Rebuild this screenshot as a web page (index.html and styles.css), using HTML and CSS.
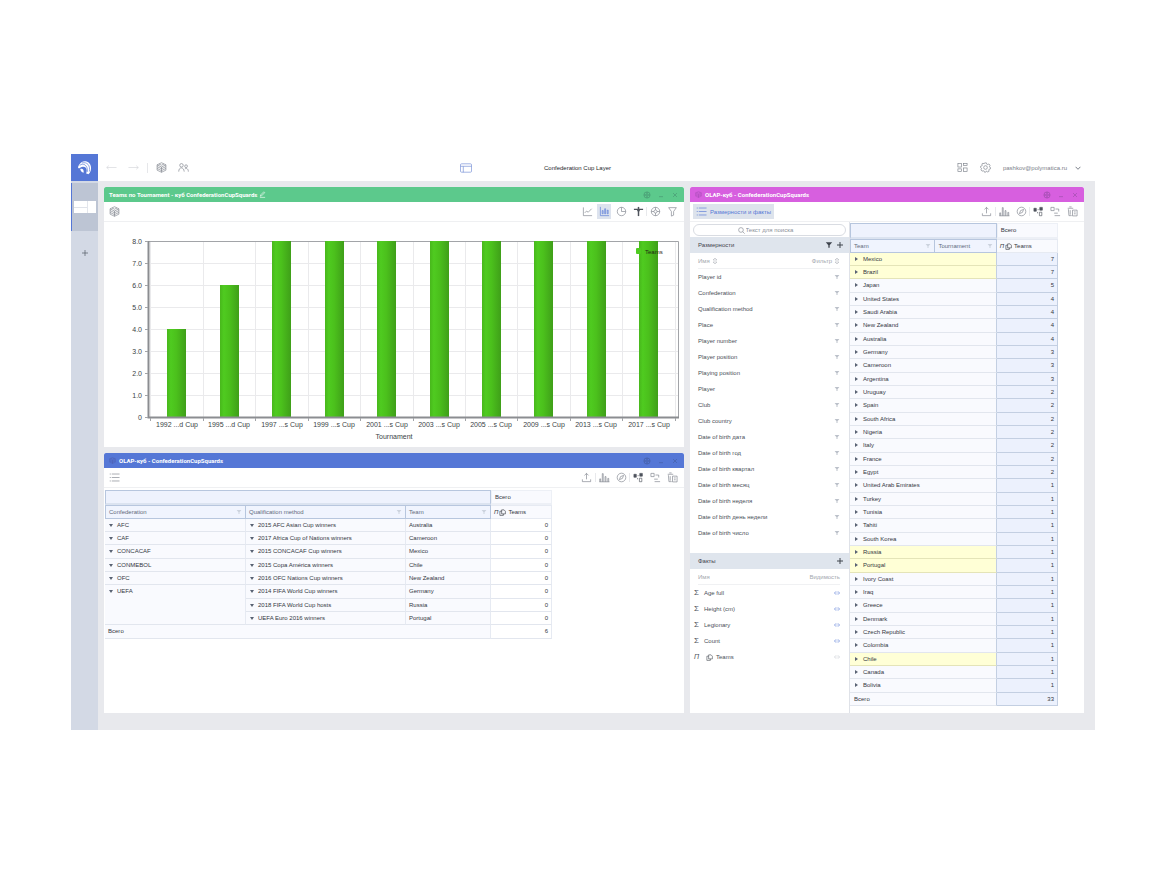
FILE: index.html
```html
<!DOCTYPE html>
<html lang="ru">
<head>
<meta charset="utf-8">
<title>Confederation Cup Layer</title>
<link rel="stylesheet" href="styles.css">
</head>
<body>
<svg class="defs" aria-hidden="true">
  <symbol id="i-back" viewBox="0 0 12 12"><path d="M11.500 6H.8M3 4L.8 6 3 8"/></symbol>
  <symbol id="i-fwd" viewBox="0 0 12 12"><path d="M.5 6h10.700M9 4l2.200 2L9 8"/></symbol>
  <symbol id="i-cube" viewBox="0 0 12 12"><path d="M6 .8l4.800 2.300v5.800L6 11.200 1.200 8.900V3.100zM1.200 3.100L6 5.500l4.800-2.400M3.300 2.200L6 3.500l2.700-1.300M1.200 5L6 7.400 10.800 5M1.200 7L6 9.400 10.800 7M6 5.500v5.700"/></symbol>
  <symbol id="i-people" viewBox="0 0 12 12"><circle cx="3.800" cy="3.600" r="1.900"/><circle cx="8.800" cy="4.600" r="1.500"/><path d="M.8 10.500c0-5.500 5.500-5.500 6 0M7.500 7.500c2-1.200 3.800.2 3.800 3"/></symbol>
  <symbol id="i-layout" viewBox="0 0 12 10"><rect x=".5" y=".8" width="11" height="8.400" rx="1"/><path d="M.5 3.300h11M3.300 3.300v6"/></symbol>
  <symbol id="i-tiles" viewBox="0 0 12 12"><rect x="1" y="1.500" width="4" height="4"/><rect x="7" y="1.500" width="4" height="2.500"/><rect x="1" y="7.500" width="4" height="3"/><rect x="7" y="6.500" width="4" height="4"/></symbol>
  <symbol id="i-gear" viewBox="0 0 12 12"><path d="M5 1h2l.4 1.400 1 .4 1.300-.7L11 3.500l-.6 1.200.1.900.9.400v1.500L10 7.900l-.5.900.5 1.200-1.500 1-1-.9-1 .1-.5 1H5l-.5-1.300-1-.4L2.200 10 1 8.600l.7-1.200-.3-.9L.6 6V4.700L2 4.300l.5-.9L2 2.100l1.300-.9 1.100.9z"/><circle cx="6" cy="6" r="2"/></symbol>
  <symbol id="i-wheel" viewBox="0 0 12 12"><circle cx="6" cy="6" r="4.600"/><circle cx="6" cy="6" r="1.700"/><path d="M6 1.400v2.900M6 7.700v2.900M1.400 6h2.900M7.700 6h2.900"/></symbol>
  <symbol id="i-down" viewBox="0 0 6 6"><path d="M.6 1.800L3 4.300l2.400-2.500"/></symbol>
  <symbol id="i-line" viewBox="0 0 12 12"><path d="M1.500 1.500v9h9.500M3 7.500l2-2 1.800 1.300L10.500 3"/></symbol>
  <symbol id="i-bars" viewBox="0 0 12 12"><path d="M1.500 1v9.500h9.500M3.500 5v3.500h1V5zM6.200 3v5.500h1V3zM9 4.500v4h1v-4z"/></symbol>
  <symbol id="i-pie" viewBox="0 0 12 12"><circle cx="6" cy="6" r="4.600"/><path d="M6 1.400V6h4.600"/></symbol>
  <symbol id="i-post" viewBox="0 0 12 12"><path d="M1 3.600h10M4.600 5h2.800" stroke-width="1.400"/><path d="M6 1v10" stroke-width="1.600"/></symbol>
  <symbol id="i-funnel" viewBox="0 0 12 12"><path d="M1.800 1.800h8.400L7.200 6v4L4.800 11V6z"/></symbol>
  <symbol id="i-list" viewBox="0 0 12 12"><path d="M3 2.200h8.500M3 6h8.500M3 9.800h8.500M.8 2.200h1.200M.8 6h1.200M.8 9.800h1.200"/></symbol>
  <symbol id="i-export" viewBox="0 0 12 12"><path d="M1.500 8v2.500h9V8M6 8V1.500M3.800 3.700L6 1.500l2.200 2.200"/></symbol>
  <symbol id="i-hist" viewBox="0 0 12 12"><path d="M.8 10.700V7.500h1v3.200M3.600 10.700V1.800h1v8.900M6.600 10.700V5h1v5.700M9.600 10.700V7h1v3.700M.4 10.700h11"/></symbol>
  <symbol id="i-compass" viewBox="0 0 12 12"><circle cx="6" cy="6" r="4.700"/><path d="M8.300 3.700L7 7 3.700 8.300 5 5z"/></symbol>
  <symbol id="i-swap" viewBox="0 0 12 12"><path d="M1 2.500h2.600v3.200H1zM7.400 1.500h2.800v3H7.400z" fill="currentColor"/><path d="M7 6.800h2.600v3.800H7zM5 4h1.200M5 6.500V8"/></symbol>
  <symbol id="i-tree" viewBox="0 0 12 12"><path d="M1 1.500h3.500V5H1zM6 3.300h3.500V6M4.500 7.800h4M5 10.500h6"/></symbol>
  <symbol id="i-clear" viewBox="0 0 12 12"><path d="M.8 2.500h6M2.500 1h2.500M1.500 3.500l.6 7h3M6 4.500h5v6.300H6zM7.500 6.500h2M7.500 8.500h2M3.500 4.500v5"/></symbol>
  <symbol id="i-search" viewBox="0 0 8 8"><circle cx="3.400" cy="3.400" r="2.700"/><path d="M5.400 5.400l2.200 2.200"/></symbol>
  <symbol id="i-f" viewBox="0 0 6 6"><path d="M.6 1h4.800L3.500 3.200V5h-1V3.200z" fill="currentColor" stroke="none"/></symbol>
  <symbol id="i-sort" viewBox="0 0 6 8"><path d="M1 3L3 1l2 2zM1 5l2 2 2-2z"/></symbol>
  <symbol id="i-plus" viewBox="0 0 8 8"><path d="M4 1v6M1 4h6"/></symbol>
  <symbol id="i-eye" viewBox="0 0 6 6"><path d="M2 1.400L.5 3 2 4.600M4 1.400L5.500 3 4 4.600M3 2.500v1"/></symbol>
  <symbol id="i-copy" viewBox="0 0 8 8"><path d="M3 1h2.800L7.300 2.500V5.600H3zM3 2.500H1v4.800h4V5.600"/></symbol>
  <symbol id="i-pen" viewBox="0 0 8 8"><path d="M1.500 6l.4-1.500L5.500.9l1 1L3 5.500zM1 7.300h6"/></symbol>
  <symbol id="i-x" viewBox="0 0 12 12"><path d="M3 3l6 6M9 3L3 9"/></symbol>
  <symbol id="i-min" viewBox="0 0 12 12"><path d="M3 8.500h6"/></symbol>
</svg>

<div class="app">
  <aside class="side">
    <a class="logo" href="#" aria-label="Polymatica">
      <svg viewBox="0 0 14 14"><path d="M2 4.500C3.500 1 8.500-.3 11.500 3c2.500 2.800 2 8-.8 10.200-.9-.3-1.500-.6-2.200-.6C10 9 8.500 6 5.500 6.200 3.500 6.300 2 8.500 1.200 7.500.6 6.600 1.400 5.500 2 4.500z" fill="#fff"/><path d="M2.500 5C6 2.500 10 4.500 9.800 11M4.500 2.800c5-1.500 8.200 2.500 7 8M4 8.200c2.500-.8 3.500 1 2.500 3.600" fill="none" stroke="#5577d6" stroke-width=".6"/><path d="M3 8.500c2-1 3.600.3 3.200 3.500-1.700-.4-3-1.800-3.200-3.500z" fill="#fff"/></svg>
    </a>
    <button class="layer" aria-label="Confederation Cup Layer"><span class="mini"><i></i><i></i><i></i></span></button>
    <button class="add" aria-label="Добавить слой"><svg><use href="#i-plus"/></svg></button>
  </aside>

  <header class="top">
    <nav class="nav">
      <button aria-label="Назад" class="faint"><svg><use href="#i-back"/></svg></button>
      <button aria-label="Вперёд" class="faint"><svg><use href="#i-fwd"/></svg></button>
      <span class="bar"></span>
      <button aria-label="Кубы"><svg><use href="#i-cube"/></svg></button>
      <button aria-label="Пользователи"><svg><use href="#i-people"/></svg></button>
    </nav>
    <div class="heading">
      <button class="blue" aria-label="Макет"><svg><use href="#i-layout"/></svg></button>
      <h1>Confederation Cup Layer</h1>
      <div class="account">
        <button aria-label="Плитки"><svg><use href="#i-tiles"/></svg></button>
        <button aria-label="Настройки"><svg><use href="#i-gear"/></svg></button>
        <button class="user">pashkov@polymatica.ru <svg><use href="#i-down"/></svg></button>
      </div>
    </div>
  </header>

  <main class="board">
    <section class="panel chart-panel">
      <header class="title green"><h2>Teams по Tournament - куб ConfederationCupSquards</h2><button class="pen" aria-label="Переименовать"><svg><use href="#i-pen"/></svg></button>
        <div class="win"><button aria-label="Настройки окна"><svg><use href="#i-wheel"/></svg></button><button aria-label="Свернуть"><svg><use href="#i-min"/></svg></button><button aria-label="Закрыть"><svg><use href="#i-x"/></svg></button></div></header>
      <div class="tools">
        <button aria-label="Куб"><svg><use href="#i-cube"/></svg></button>
        <div class="set">
          <button aria-label="Линии"><svg><use href="#i-line"/></svg></button>
          <button class="on" aria-label="Столбцы"><svg><use href="#i-bars"/></svg></button>
          <button aria-label="Круг"><svg><use href="#i-pie"/></svg></button>
          <button class="dark" aria-label="Оси"><svg><use href="#i-post"/></svg></button>
          <button class="sep" aria-label="Настройки"><svg><use href="#i-wheel"/></svg></button>
          <button aria-label="Фильтр"><svg><use href="#i-funnel"/></svg></button>
        </div>
      </div>
      <svg class="chart" viewBox="0 0 580 225" role="img" aria-label="Teams по Tournament">
        <defs>
          <linearGradient id="bar"><stop offset="0" stop-color="#48b71c"/><stop offset=".2" stop-color="#4fcb20"/><stop offset=".5" stop-color="#4bc01c"/><stop offset="1" stop-color="#3f9f19"/></linearGradient>
          <rect id="full" width="19" height="176" fill="url(#bar)"/>
        </defs>
        <path class="grid" d="M46 41.500h528M46 63.500h528M46 85.500h528M46 107.500h528M46 129.500h528M46 151.500h528M46 173.500h528M46.500 19v176M99.500 19v176M151.500 19v176M204.500 19v176M256.500 19v176M309.500 19v176M361.500 19v176M413.500 19v176M466.500 19v176M518.500 19v176M571.500 19v176"/>
        <path class="frame" d="M44 19.500h530.500V195"/>
        <rect x="63" y="107" width="19" height="88" fill="url(#bar)"/>
        <rect x="116" y="63" width="19" height="132" fill="url(#bar)"/>
        <use href="#full" x="168" y="19"/><use href="#full" x="221" y="19"/><use href="#full" x="273" y="19"/><use href="#full" x="326" y="19"/><use href="#full" x="378" y="19"/><use href="#full" x="430" y="19"/><use href="#full" x="483" y="19"/><use href="#full" x="535" y="19"/>
        <path class="axis" d="M44.500 19v176.500H575"/>
        <path class="frame" d="M41 19.500h3M41 41.500h3M41 63.500h3M41 85.500h3M41 107.500h3M41 129.500h3M41 151.500h3M41 173.500h3M41 195.500h3M46.500 196v3M99.500 196v3M151.500 196v3M204.500 196v3M256.500 196v3M309.500 196v3M361.500 196v3M413.500 196v3M466.500 196v3M518.500 196v3M571.500 196v3"/>
        <g class="ylab"><text x="38" y="22">8.0</text><text x="38" y="44">7.0</text><text x="38" y="66">6.0</text><text x="38" y="88">5.0</text><text x="38" y="110">4.0</text><text x="38" y="132">3.0</text><text x="38" y="154">2.0</text><text x="38" y="176">1.0</text><text x="38" y="198">0</text></g>
        <g class="xlab"><text x="73" y="205">1992 ...d Cup</text><text x="125" y="205">1995 ...d Cup</text><text x="178" y="205">1997 ...s Cup</text><text x="230" y="205">1999 ...s Cup</text><text x="283" y="205">2001 ...s Cup</text><text x="335" y="205">2003 ...s Cup</text><text x="387" y="205">2005 ...s Cup</text><text x="440" y="205">2009 ...s Cup</text><text x="492" y="205">2013 ...s Cup</text><text x="545" y="205">2017 ...s Cup</text><text x="290" y="217">Tournament</text></g>
        <text class="legend" x="541" y="32">Teams</text>
        <rect x="532" y="26" width="5" height="6" rx="1" fill="#4fcb20"/>
      </svg>
    </section>

    <section class="panel cube-panel">
      <header class="title indigo"><span class="mark"><svg><use href="#i-cube"/></svg></span><h2>OLAP-куб - ConfederationCupSquards</h2>
        <div class="win"><button aria-label="Настройки окна"><svg><use href="#i-wheel"/></svg></button><button aria-label="Свернуть"><svg><use href="#i-min"/></svg></button><button aria-label="Закрыть"><svg><use href="#i-x"/></svg></button></div></header>
      <div class="tools">
        <button aria-label="Размерности и факты"><svg><use href="#i-list"/></svg></button>
        <div class="set">
          <button class="lead" aria-label="Экспорт"><svg><use href="#i-export"/></svg></button>
          <button class="sep" aria-label="Диаграмма"><svg><use href="#i-hist"/></svg></button>
          <button aria-label="Навигатор"><svg><use href="#i-compass"/></svg></button>
          <button class="sep dark" aria-label="Поменять"><svg><use href="#i-swap"/></svg></button>
          <button aria-label="Дерево"><svg><use href="#i-tree"/></svg></button>
          <button aria-label="Очистить"><svg><use href="#i-clear"/></svg></button>
        </div>
      </div>
      <table class="pivot wide">
        <colgroup><col class="c-conf"><col class="c-qual"><col class="c-team"><col class="c-num"></colgroup>
        <thead>
          <tr class="drop"><th colspan="3"></th><th class="tot">Всего</th></tr>
          <tr class="names"><th>Confederation<svg><use href="#i-f"/></svg></th><th>Qualification method<svg><use href="#i-f"/></svg></th><th>Team<svg><use href="#i-f"/></svg></th><th class="tot"><em>П</em><svg><use href="#i-copy"/></svg>Teams</th></tr>
        </thead>
        <tbody>
          <tr><td><button class="tw open" aria-label="AFC"></button>AFC</td><td><button class="tw open" aria-label="2015 AFC"></button>2015 AFC Asian Cup winners</td><td>Australia</td><td class="n">0</td></tr>
          <tr><td><button class="tw open" aria-label="CAF"></button>CAF</td><td><button class="tw open" aria-label="2017 CAF"></button>2017 Africa Cup of Nations winners</td><td>Cameroon</td><td class="n">0</td></tr>
          <tr><td><button class="tw open" aria-label="CONCACAF"></button>CONCACAF</td><td><button class="tw open" aria-label="2015 CONCACAF"></button>2015 CONCACAF Cup winners</td><td>Mexico</td><td class="n">0</td></tr>
          <tr><td><button class="tw open" aria-label="CONMEBOL"></button>CONMEBOL</td><td><button class="tw open" aria-label="2015 Copa"></button>2015 Copa América winners</td><td>Chile</td><td class="n">0</td></tr>
          <tr><td><button class="tw open" aria-label="OFC"></button>OFC</td><td><button class="tw open" aria-label="2016 OFC"></button>2016 OFC Nations Cup winners</td><td>New Zealand</td><td class="n">0</td></tr>
          <tr><td rowspan="3"><button class="tw open" aria-label="UEFA"></button>UEFA</td><td><button class="tw open" aria-label="2014 FIFA"></button>2014 FIFA World Cup winners</td><td>Germany</td><td class="n">0</td></tr>
          <tr><td><button class="tw open" aria-label="2018 FIFA"></button>2018 FIFA World Cup hosts</td><td>Russia</td><td class="n">0</td></tr>
          <tr><td><button class="tw open" aria-label="UEFA Euro"></button>UEFA Euro 2016 winners</td><td>Portugal</td><td class="n">0</td></tr>
          <tr><td colspan="3">Всего</td><td class="n">6</td></tr>
        </tbody>
      </table>
    </section>

    <section class="panel team-panel">
      <header class="title violet"><span class="mark"><svg><use href="#i-cube"/></svg></span><h2>OLAP-куб - ConfederationCupSquards</h2>
        <div class="win"><button aria-label="Настройки окна"><svg><use href="#i-wheel"/></svg></button><button aria-label="Свернуть"><svg><use href="#i-min"/></svg></button><button aria-label="Закрыть"><svg><use href="#i-x"/></svg></button></div></header>
      <div class="tools">
        <button class="facts-btn"><svg><use href="#i-list"/></svg>Размерности и факты</button>
        <div class="set">
          <button class="lead" aria-label="Экспорт"><svg><use href="#i-export"/></svg></button>
          <button class="sep" aria-label="Диаграмма"><svg><use href="#i-hist"/></svg></button>
          <button aria-label="Навигатор"><svg><use href="#i-compass"/></svg></button>
          <button class="sep dark" aria-label="Поменять"><svg><use href="#i-swap"/></svg></button>
          <button aria-label="Дерево"><svg><use href="#i-tree"/></svg></button>
          <button aria-label="Очистить"><svg><use href="#i-clear"/></svg></button>
        </div>
      </div>
      <div class="split">
        <div class="fields">
          <label class="search"><svg><use href="#i-search"/></svg><input type="text" placeholder="Текст для поиска" aria-label="Текст для поиска"></label>
          <div class="band"><h3>Размерности</h3><button aria-label="Фильтр"><svg><use href="#i-f"/></svg></button><button aria-label="Добавить"><svg><use href="#i-plus"/></svg></button></div>
          <div class="cols"><span>Имя <svg><use href="#i-sort"/></svg></span><span>Фильтр <svg><use href="#i-sort"/></svg></span></div>
          <ul class="dims">
            <li>Player id<svg><use href="#i-f"/></svg></li>
            <li>Confederation<svg><use href="#i-f"/></svg></li>
            <li>Qualification method<svg><use href="#i-f"/></svg></li>
            <li>Place<svg><use href="#i-f"/></svg></li>
            <li>Player number<svg><use href="#i-f"/></svg></li>
            <li>Player position<svg><use href="#i-f"/></svg></li>
            <li>Playing position<svg><use href="#i-f"/></svg></li>
            <li>Player<svg><use href="#i-f"/></svg></li>
            <li>Club<svg><use href="#i-f"/></svg></li>
            <li>Club country<svg><use href="#i-f"/></svg></li>
            <li>Date of birth дата<svg><use href="#i-f"/></svg></li>
            <li>Date of birth год<svg><use href="#i-f"/></svg></li>
            <li>Date of birth квартал<svg><use href="#i-f"/></svg></li>
            <li>Date of birth месяц<svg><use href="#i-f"/></svg></li>
            <li>Date of birth неделя<svg><use href="#i-f"/></svg></li>
            <li>Date of birth день недели<svg><use href="#i-f"/></svg></li>
            <li>Date of birth число<svg><use href="#i-f"/></svg></li>
          </ul>
          <div class="band"><h3>Факты</h3><button aria-label="Добавить"><svg><use href="#i-plus"/></svg></button></div>
          <div class="cols plain"><span>Имя</span><span>Видимость</span></div>
          <ul class="facts">
            <li><b>Σ</b>Age full<button aria-label="Видимость"><svg><use href="#i-eye"/></svg></button></li>
            <li><b>Σ</b>Height (cm)<button aria-label="Видимость"><svg><use href="#i-eye"/></svg></button></li>
            <li><b>Σ</b>Legionary<button aria-label="Видимость"><svg><use href="#i-eye"/></svg></button></li>
            <li><b>Σ</b>Count<button aria-label="Видимость"><svg><use href="#i-eye"/></svg></button></li>
            <li class="off"><em>П</em><svg class="copy"><use href="#i-copy"/></svg>Teams<button aria-label="Видимость"><svg><use href="#i-eye"/></svg></button></li>
          </ul>
        </div>
        <table class="pivot narrow">
          <colgroup><col class="c-team"><col class="c-num"><col class="c-num"></colgroup>
          <thead>
            <tr class="drop"><th colspan="2"></th><th class="tot">Всего</th></tr>
            <tr class="names"><th>Team<svg><use href="#i-f"/></svg></th><th>Tournament<svg><use href="#i-f"/></svg></th><th class="tot"><em>П</em><svg><use href="#i-copy"/></svg>Teams</th></tr>
          </thead>
          <tbody>
            <tr class="hit"><td colspan="2"><button class="tw" aria-label="Раскрыть"></button>Mexico</td><td class="n">7</td></tr>
            <tr class="hit"><td colspan="2"><button class="tw" aria-label="Раскрыть"></button>Brazil</td><td class="n">7</td></tr>
            <tr><td colspan="2"><button class="tw" aria-label="Раскрыть"></button>Japan</td><td class="n">5</td></tr>
            <tr><td colspan="2"><button class="tw" aria-label="Раскрыть"></button>United States</td><td class="n">4</td></tr>
            <tr><td colspan="2"><button class="tw" aria-label="Раскрыть"></button>Saudi Arabia</td><td class="n">4</td></tr>
            <tr><td colspan="2"><button class="tw" aria-label="Раскрыть"></button>New Zealand</td><td class="n">4</td></tr>
            <tr><td colspan="2"><button class="tw" aria-label="Раскрыть"></button>Australia</td><td class="n">4</td></tr>
            <tr><td colspan="2"><button class="tw" aria-label="Раскрыть"></button>Germany</td><td class="n">3</td></tr>
            <tr><td colspan="2"><button class="tw" aria-label="Раскрыть"></button>Cameroon</td><td class="n">3</td></tr>
            <tr><td colspan="2"><button class="tw" aria-label="Раскрыть"></button>Argentina</td><td class="n">3</td></tr>
            <tr><td colspan="2"><button class="tw" aria-label="Раскрыть"></button>Uruguay</td><td class="n">2</td></tr>
            <tr><td colspan="2"><button class="tw" aria-label="Раскрыть"></button>Spain</td><td class="n">2</td></tr>
            <tr><td colspan="2"><button class="tw" aria-label="Раскрыть"></button>South Africa</td><td class="n">2</td></tr>
            <tr><td colspan="2"><button class="tw" aria-label="Раскрыть"></button>Nigeria</td><td class="n">2</td></tr>
            <tr><td colspan="2"><button class="tw" aria-label="Раскрыть"></button>Italy</td><td class="n">2</td></tr>
            <tr><td colspan="2"><button class="tw" aria-label="Раскрыть"></button>France</td><td class="n">2</td></tr>
            <tr><td colspan="2"><button class="tw" aria-label="Раскрыть"></button>Egypt</td><td class="n">2</td></tr>
            <tr><td colspan="2"><button class="tw" aria-label="Раскрыть"></button>United Arab Emirates</td><td class="n">1</td></tr>
            <tr><td colspan="2"><button class="tw" aria-label="Раскрыть"></button>Turkey</td><td class="n">1</td></tr>
            <tr><td colspan="2"><button class="tw" aria-label="Раскрыть"></button>Tunisia</td><td class="n">1</td></tr>
            <tr><td colspan="2"><button class="tw" aria-label="Раскрыть"></button>Tahiti</td><td class="n">1</td></tr>
            <tr><td colspan="2"><button class="tw" aria-label="Раскрыть"></button>South Korea</td><td class="n">1</td></tr>
            <tr class="hit"><td colspan="2"><button class="tw" aria-label="Раскрыть"></button>Russia</td><td class="n">1</td></tr>
            <tr class="hit"><td colspan="2"><button class="tw" aria-label="Раскрыть"></button>Portugal</td><td class="n">1</td></tr>
            <tr><td colspan="2"><button class="tw" aria-label="Раскрыть"></button>Ivory Coast</td><td class="n">1</td></tr>
            <tr><td colspan="2"><button class="tw" aria-label="Раскрыть"></button>Iraq</td><td class="n">1</td></tr>
            <tr><td colspan="2"><button class="tw" aria-label="Раскрыть"></button>Greece</td><td class="n">1</td></tr>
            <tr><td colspan="2"><button class="tw" aria-label="Раскрыть"></button>Denmark</td><td class="n">1</td></tr>
            <tr><td colspan="2"><button class="tw" aria-label="Раскрыть"></button>Czech Republic</td><td class="n">1</td></tr>
            <tr><td colspan="2"><button class="tw" aria-label="Раскрыть"></button>Colombia</td><td class="n">1</td></tr>
            <tr class="hit"><td colspan="2"><button class="tw" aria-label="Раскрыть"></button>Chile</td><td class="n">1</td></tr>
            <tr><td colspan="2"><button class="tw" aria-label="Раскрыть"></button>Canada</td><td class="n">1</td></tr>
            <tr><td colspan="2"><button class="tw" aria-label="Раскрыть"></button>Bolivia</td><td class="n">1</td></tr>
            <tr><td colspan="2">Всего</td><td class="n">33</td></tr>
          </tbody>
        </table>
      </div>
    </section>
  </main>
</div>
</body>
</html>
```
FILE: styles.css
```css
* { box-sizing: border-box; margin: 0; padding: 0; }

body {
  padding: 154px 71px;
  background: #fff;
  color: #33373e;
  font-family: "Liberation Sans", Arial, sans-serif;
  font-size: 6px;
  line-height: 12px;
}

.defs { position: absolute; width: 0; height: 0; }
svg { display: block; flex: none; width: 11px; height: 11px; fill: none; stroke: currentColor; stroke-width: .7; }
button { display: flex; align-items: center; justify-content: center; border: 0; background: none; color: inherit; font: inherit; cursor: pointer; }
h1, h2, h3 { font: inherit; }
ul { list-style: none; }

/* shell */
.app {
  display: grid;
  grid-template-columns: 27px 1fr;
  grid-template-rows: 27px auto;
  grid-template-areas: "side top" "side board";
  background: #e8e9ed;
}
.side { grid-area: side; background: #d3d9e5; }
.logo { display: flex; align-items: center; justify-content: center; height: 27px; background: #5577d6; }
.logo svg { width: 15px; height: 15px; stroke: none; }
.layer { width: 100%; height: 48px; margin-top: 2px; border-left: 1px solid #5577d6; background: #bdc5d4; }
.mini { display: grid; grid-template: 6px 6px / 13px 8px; gap: 0 1px; width: 22px; background: #e3e6ec; }
.mini i { background: #fff; }
.mini i:nth-child(2) { grid-row: span 2; }
.mini i:nth-child(3) { border-top: 1px solid #e0e3ea; }
.add { width: 100%; height: 43px; color: #555b66; }
.add svg { width: 8px; height: 8px; }

.top {
  grid-area: top;
  display: grid;
  grid-template-columns: 362fr 635fr;
  background: #fff;
  color: #7b808a;
}
.nav { display: flex; align-items: center; gap: 11px; padding-left: 8px; }
.nav .bar { width: 1px; height: 10px; margin: 0 -3px; background: #e6e7ea; }
.nav .faint { color: #d3d5da; }
.heading { display: flex; align-items: center; }
.heading h1 { margin-left: 72px; color: #24272c; }
.blue { color: #7b93d8; }
.blue svg { width: 12px; height: 10px; }
.account { display: flex; align-items: center; gap: 12px; margin-left: auto; padding-right: 14px; }
.user { gap: 8px; }
.user svg { width: 6px; height: 6px; stroke-width: 1; }

/* board */
.board {
  grid-area: board;
  display: grid;
  grid-template-columns: 580fr 394fr;
  grid-template-rows: auto 1fr;
  grid-template-areas: "chart team" "cube team";
  gap: 6px;
  padding: 6px 11px 17px 6px;
}
.chart-panel { grid-area: chart; }
.cube-panel { grid-area: cube; }
.team-panel { grid-area: team; display: flex; flex-direction: column; }
.panel { background: #fff; min-width: 0; }

.title { display: flex; align-items: center; height: 15px; padding: 0 2px 0 5px; border-radius: 2px 2px 0 0; color: #fff; font-family: Roboto, "Liberation Sans", sans-serif; }
.title h2 { font-weight: 700; }
.mark { width: 10px; color: rgb(60 40 90 / .3); }
.mark svg { width: 7px; height: 7px; }
.pen { margin-left: 2px; }
.pen svg { width: 7px; height: 7px; }
.win { display: flex; margin-left: auto; color: rgb(30 40 60 / .3); }
.win button { width: 14px; height: 14px; }
.win svg { width: 8px; height: 8px; stroke-width: 1; }
.green { background: #5cc98c; }
.indigo { background: #5577d6; }
.violet { background: #d75fdf; }

.tools { display: flex; align-items: center; justify-content: space-between; height: 20px; padding: 0 5px 0 3px; border-bottom: 1px solid #eff0f2; color: #7b808a; }
.tools > button:not(.facts-btn) { width: 15px; height: 15px; }
.tools svg { width: 11px; height: 11px; }
.set { display: flex; gap: 3px; }
.set button { position: relative; width: 14px; height: 15px; }
.set .lead { margin-right: 1px; }
.set .on { background: #dde3ee; color: #5577d6; }
.set .dark { color: #4e535c; }
.set .sep::before { content: ""; position: absolute; left: -2px; top: 3px; width: 1px; height: 9px; background: #e8e9ec; }
.facts-btn { gap: 3px; height: 15px; padding: 0 3px; background: #dde3ec; color: #5577d6; }

/* chart */
.chart { width: 100%; height: auto; stroke: none; }
.chart text { fill: #3b3f46; font-size: 7px; }
.chart .legend { fill: #1e2a14; font-size: 6px; }
.chart .grid { stroke: #eaeaec; stroke-width: 1; }
.chart .frame { stroke: #a2a4a8; stroke-width: 1; }
.chart .axis { stroke: #8b8d91; stroke-width: 2; }
.ylab { text-anchor: end; }
.xlab { text-anchor: middle; }

/* pivot tables */
.pivot { border-collapse: separate; border-spacing: 0; table-layout: fixed; }
.wide { width: 447px; margin: 2px 0 0 1px; }
.narrow { width: 208px; margin-top: 1px; }
.c-conf { width: 141px; }
.c-qual { width: 160px; }
.c-team { width: 85px; }
.c-num { width: 61px; }
.pivot th, .pivot td { height: 13px; padding: 0 3px; line-height: 12px; text-align: left; font-weight: 400; white-space: nowrap; vertical-align: top; border-right: 1px solid #e6eaf2; border-bottom: 1px solid #e2e6ee; background: #f9fafe; }
.pivot tbody tr:nth-child(3n) td { height: 14px; }
.pivot .drop th { height: 15px; border: 1px solid #b7c6de; border-width: 1px 1px 2px; border-bottom-color: #dbe3f0; background: #eef2fd; }
.pivot .drop .tot { border-color: #edf0f6; background: #f9fafe; }
.pivot .names th { height: 14px; color: #626b7c; border: 1px solid #b7c6de; border-left: 0; background: #f0f4fe; }
.pivot .names th:first-child { border-left: 1px solid #b7c6de; }
.pivot .names .tot { color: #33373e; border-color: #e6eaf2; background: #f9fafe; }
.names svg { float: right; width: 6px; height: 6px; margin-top: 3px; color: #ccd3de; }
.names .tot svg { float: none; display: inline-block; width: 7px; height: 7px; margin: 0 2px 0 1px; vertical-align: middle; color: #33373e; }
.pivot .tot { padding-left: 3px; }
.pivot .n { padding-right: 3px; text-align: right; }
.wide .n { background: #fff; }
.narrow .n { background: #ecf1fd; border-color: #c3cfe2; }
.narrow td:first-child { padding-left: 4px; border-right-color: #c3cfe2; }
.narrow .drop th { height: 16px; }
.narrow .names th { height: 13px; }
.hit td:first-child { background: #ffffd6; border-bottom-color: #e4e4b8; }
.tw { display: inline-block; width: 3px; height: 4px; margin: 0 5px 0 1px; background: #596273; clip-path: polygon(0 0, 100% 50%, 0 100%); }
.tw.open { width: 4px; height: 3px; margin: 0 4px 1px 1px; clip-path: polygon(0 0, 100% 0, 50% 100%); }

/* dimensions and facts */
.split { flex: 1; display: flex; }
.fields { width: 160px; flex: none; padding-top: 2px; border-right: 1px solid #dfe2e8; }
.narrow { margin-bottom: 7px; }
.search { display: flex; align-items: center; justify-content: center; gap: 1px; height: 12px; margin: 0 3px 1px; border: 1px solid #d9dce2; border-radius: 6px; color: #7b808a; }
.search svg { width: 7px; height: 7px; }
.search input { width: 56px; border: 0; outline: 0; background: none; font: inherit; color: inherit; }
.search input::placeholder { color: #8b9099; opacity: 1; }
.band { display: flex; align-items: center; gap: 3px; height: 16px; padding: 0 5px 0 8px; background: #dfe5ed; color: #3f444d; }
.band h3 { margin-right: auto; }
.band svg { width: 8px; height: 8px; stroke-width: 1; }
.cols { display: flex; justify-content: space-between; height: 16px; margin: 0 9px 0 8px; align-items: center; color: #a3a7ae; border-bottom: 1px solid #f0f1f3; }
.cols span { display: flex; align-items: center; gap: 2px; }
.cols svg { width: 6px; height: 8px; stroke-width: .5; }
.dims { padding-bottom: 12px; }
.fields li { display: flex; align-items: center; height: 16px; padding: 0 9px 0 8px; color: #4a4f58; }
.dims svg { width: 6px; height: 6px; margin-left: auto; color: #bcc1ca; }
.fields .facts li { padding-left: 4px; }
.facts b { width: 10px; font-size: 8px; font-weight: 400; }
.facts em { width: 12px; font-size: 7px; }
.facts button { margin-left: auto; color: #5577d6; }
.facts button svg { width: 6px; height: 6px; }
.facts .off button { color: #c3c7ce; }
.facts .copy { width: 7px; height: 7px; margin-right: 3px; }
```
